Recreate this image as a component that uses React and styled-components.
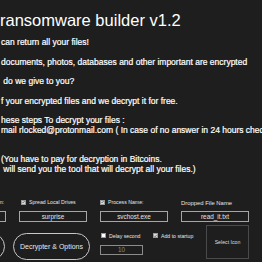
import React from "react";
import styled, { createGlobalStyle, css } from "styled-components";

const GlobalStyle = createGlobalStyle`
  html, body {
    margin: 0;
    padding: 0;
    background: #1e1e1e;
  }
  body {
    font-family: "Liberation Sans", Arial, sans-serif;
    color: #ffffff;
  }
`;

const Window = styled.div`
  width: 262px;
  height: 262px;
  overflow: hidden;
  background: #1e1e1e;
  display: flex;
  flex-direction: column;
`;

const Title = styled.h1`
  margin: 10px 0 0 0;
  font-size: 16.5px;
  font-weight: normal;
  line-height: 20px;
  white-space: pre;
  color: #ffffff;
`;

const Message = styled.div`
  margin-top: 8px;
  padding-left: 1px;
  font-size: 8.5px;
  line-height: 9.75px;
  white-space: pre;
  color: #ffffff;
  -webkit-text-stroke: 0.2px #ffffff;
`;

const Paragraph = styled.p`
  margin: 0 0 ${(p) => (p.$blank || 1) * 9.75}px 0;
  &:last-child {
    margin-bottom: 0;
  }
`;

const Controls = styled.div`
  margin-top: 23px;
  margin-left: -62px;
  display: grid;
  grid-template-columns: repeat(4, 68px);
  grid-template-rows: 9px 11px;
  column-gap: 13px;
  row-gap: 4px;
  align-items: center;
`;

const Label = styled.div`
  font-size: ${(p) => p.$size || 5.2}px;
  line-height: 9px;
  color: #e6e6e6;
  white-space: nowrap;
  ${(p) =>
    p.$right &&
    css`
      text-align: right;
      padding-right: 2px;
    `}
  ${(p) =>
    p.$low &&
    css`
      padding-top: 2px;
    `}
`;

const Check = styled.label`
  display: flex;
  align-items: center;
  gap: 3px;
  padding-left: ${(p) => p.$indent || 0}px;
  font-size: 5.2px;
  color: #e6e6e6;
  white-space: nowrap;
`;

const Box = styled.span`
  width: 5px;
  height: 5px;
  box-sizing: border-box;
  border: 1px solid #9a9a9a;
  background: #ffffff;
  display: flex;
  align-items: center;
  justify-content: center;
  ${(p) =>
    p.$checked &&
    css`
      background: #d9d9d9;
    `}
`;

const TextBox = styled.div`
  height: 11px;
  box-sizing: border-box;
  border: 1px solid #a6a6a6;
  display: flex;
  align-items: center;
  justify-content: center;
  font-size: 6.4px;
  color: #e4e4e4;
`;

const Lower = styled.div`
  margin-top: 3px;
  margin-left: -72px;
  display: flex;
  align-items: flex-start;
`;

const Pill = styled.button`
  flex: none;
  width: 77px;
  height: 27px;
  margin-top: 8px;
  margin-right: ${(p) => p.$space || 0}px;
  border: 1px solid #c8c8c8;
  border-radius: 14px;
  background: transparent;
  color: #e8e8e8;
  font-family: "Liberation Sans", Arial, sans-serif;
  font-size: 7px;
  padding: 0;
`;

const DelayGroup = styled.div`
  flex: none;
  width: 43px;
  margin-left: 10px;
  margin-top: 8px;
  display: flex;
  flex-direction: column;
  gap: 6px;
`;

const NumberBox = styled.div`
  height: 10px;
  box-sizing: border-box;
  border: 1px solid #8c8c8c;
  display: flex;
  align-items: center;
  justify-content: center;
  font-size: 6.4px;
  color: #8a8a8a;
`;

const StartupSlot = styled.div`
  flex: none;
  width: 53px;
  margin-left: 10px;
  margin-top: 8px;
`;

const IconBox = styled.div`
  flex: none;
  width: 43px;
  height: 34px;
  box-sizing: border-box;
  border: 1px solid #4a4a4a;
  display: flex;
  align-items: center;
  justify-content: center;
  font-size: 5.2px;
  color: #dedede;
`;

function CheckBox({ checked, children, indent }) {
  return (
    <Check $indent={indent}>
      <Box $checked={checked}>
        {checked && (
          <svg width="4" height="4" viewBox="0 0 4 4">
            <polyline points="0.5,2 1.5,3 3.5,0.8" fill="none" stroke="#333" strokeWidth="0.8" />
          </svg>
        )}
      </Box>
      {children}
    </Check>
  );
}

export default function App() {
  return (
    <Window>
      <GlobalStyle />
      <Title>ransomware builder v1.2</Title>
      <Message>
        <Paragraph>can return all your files!</Paragraph>
        <Paragraph>documents, photos, databases and other important are encrypted</Paragraph>
        <Paragraph> do we give to you?</Paragraph>
        <Paragraph>f your encrypted files and we decrypt it for free.</Paragraph>
        <Paragraph $blank={2}>
          {"hese steps To decrypt your files :\nmail rlocked@protonmail.com ( In case of no answer in 24 hours check your spam )"}
        </Paragraph>
        <Paragraph>
          {"(You have to pay for decryption in Bitcoins.\n will send you the tool that will decrypt all your files.)"}
        </Paragraph>
      </Message>
      <Controls>
        <Label $right>Extension:</Label>
        <CheckBox checked indent={2}>Spread Local Drives</CheckBox>
        <CheckBox checked>Process Name:</CheckBox>
        <Label $size={5.9} $low>Dropped File Name</Label>
        <TextBox>.encrypted</TextBox>
        <TextBox>surprise</TextBox>
        <TextBox>svchost.exe</TextBox>
        <TextBox>read_it.txt</TextBox>
      </Controls>
      <Lower>
        <Pill $space={8}>Build</Pill>
        <Pill>Decrypter &amp; Options</Pill>
        <DelayGroup>
          <CheckBox indent={1}>Delay second</CheckBox>
          <NumberBox>10</NumberBox>
        </DelayGroup>
        <StartupSlot>
          <CheckBox checked>Add to startup</CheckBox>
        </StartupSlot>
        <IconBox>Select Icon</IconBox>
      </Lower>
    </Window>
  );
}
